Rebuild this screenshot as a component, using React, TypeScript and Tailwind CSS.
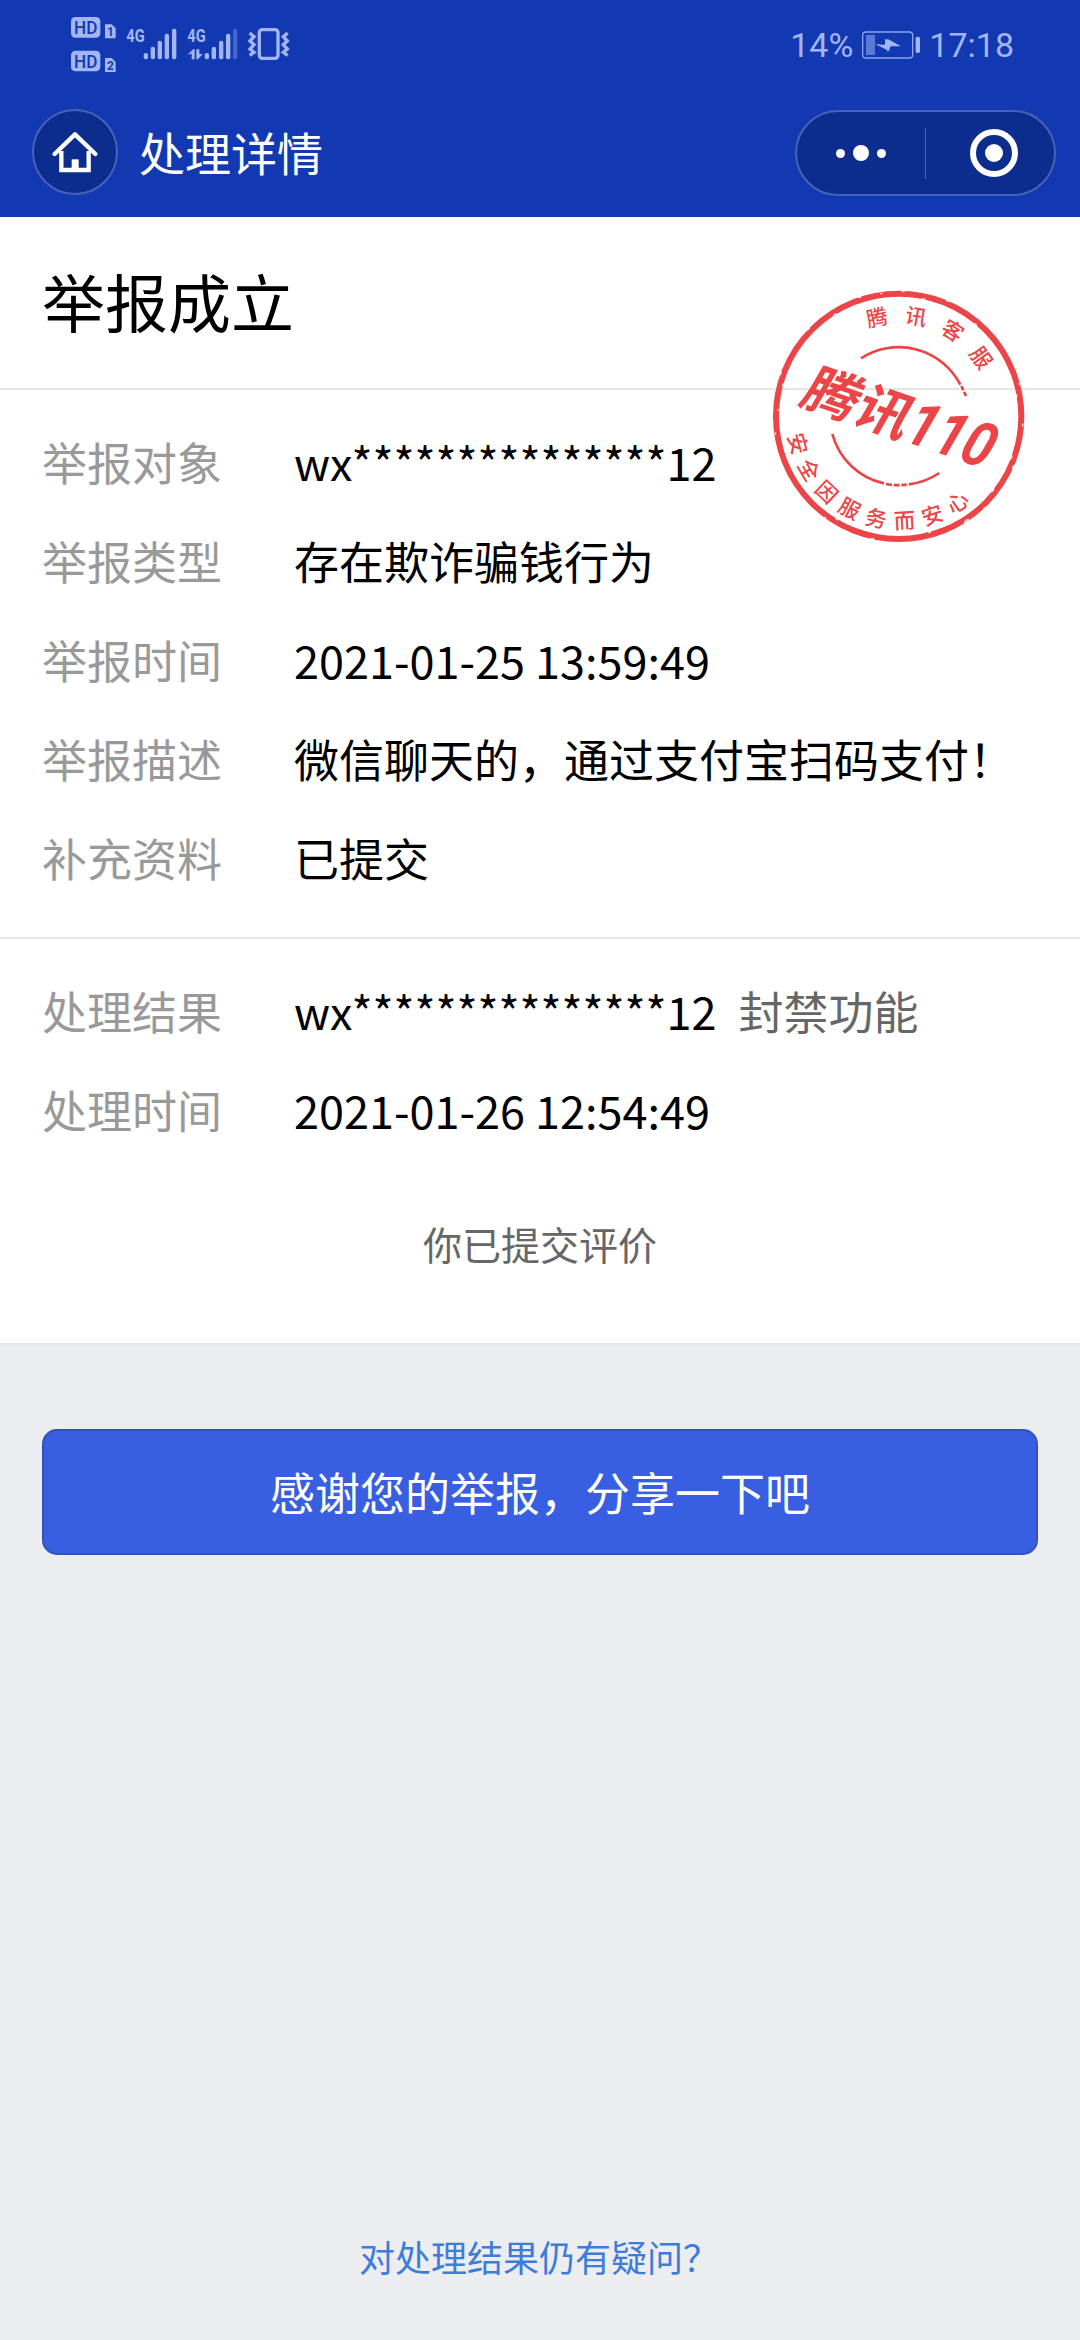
import type { ReactNode } from 'react'

type Row = { label: string; value: string; extra?: string }

const reportRows: Row[] = [
  { label: '举报对象', value: 'wx***************12' },
  { label: '举报类型', value: '存在欺诈骗钱行为' },
  { label: '举报时间', value: '2021-01-25 13:59:49' },
  { label: '举报描述', value: '微信聊天的，通过支付宝扫码支付！' },
  { label: '补充资料', value: '已提交' },
]

const resultRows: Row[] = [
  { label: '处理结果', value: 'wx***************12', extra: '封禁功能' },
  { label: '处理时间', value: '2021-01-26 12:54:49' },
]

const SignalIcons = () => (
  <svg width="260" height="90" viewBox="0 0 780 270" fill="#a3b6f3" stroke="none">
    {/* HD 1 / HD 2 */}
    {[0, 101].map((dy, i) => (
      <g key={dy} transform={`translate(0 ${dy})`}>
        <rect x="63" y="51" width="88" height="62" rx="13" />
        <text x="107" y="102" fontSize="54" fontWeight="500" textAnchor="middle" textLength="70" lengthAdjust="spacingAndGlyphs" fill="#1239b2" fontFamily="Roboto, sans-serif">HD</text>
        <path d="M165 73h20l12 12v30h-32z" />
        <text x="181" y="108" fontSize="36" fontWeight="700" textAnchor="middle" fill="#1239b2" fontFamily="Roboto, sans-serif">{i + 1}</text>
      </g>
    ))}

    <text x="229" y="126" fontSize="57" fontWeight="700" textLength="55" lengthAdjust="spacingAndGlyphs" fontFamily="Roboto, sans-serif">4G</text>
    <rect x="281" y="159" width="13" height="19" rx="6" />
    <rect x="302" y="140" width="13" height="38" rx="6" />
    <rect x="323" y="122" width="13" height="56" rx="6" />
    <rect x="344" y="101" width="13" height="77" rx="6" />
    <rect x="366" y="86" width="13" height="92" rx="6" />

    <text x="412" y="126" fontSize="57" fontWeight="700" textLength="55" lengthAdjust="spacingAndGlyphs" fontFamily="Roboto, sans-serif">4G</text>
    <path d="M413 164l16-16h5v30h-9v-17zM439 148h9v14h10l-14 16h-5z" />
    <rect x="464" y="159" width="13" height="19" rx="6" />
    <rect x="485" y="140" width="13" height="38" rx="6" />
    <rect x="507" y="122" width="13" height="56" rx="6" />
    <rect x="528" y="101" width="13" height="77" rx="6" />
    <rect x="549" y="86" width="13" height="92" rx="6" opacity="0.35" />

    {/* vibrate */}
    <g fill="none" stroke="#a3b6f3" strokeWidth="10">
      <rect x="628" y="89" width="56" height="86" rx="9" />
      <path d="M599 99l13 11-12 13 12 11-12 13 12 10-13 9M713 99l-13 11 12 13-12 11 12 13-12 10 13 9" />
    </g>
  </svg>
)

const BatteryIcon = () => (
  <svg width="60" height="30" viewBox="0 0 180 90" fill="none">
    <rect x="8" y="6" width="150" height="78" rx="10" stroke="#8ba2ec" strokeWidth="4" />
    <rect x="18" y="15" width="27" height="60" fill="#5b7ad6" />
    <rect x="167" y="20" width="13" height="49" rx="5" fill="#a3b6f3" />
    <path d="M46 42l36 5V26l39 22-33-2v18z" fill="#a3b6f3" />
    <path d="M47 44h28V26l47 23-30 0-9 17-3-13z" fill="#a3b6f3" />
  </svg>
)

const HomeIcon = () => (
  <svg width="46" height="42" viewBox="0 0 138 126" fill="none" stroke="#fff" strokeLinejoin="round">
    <path d="M8 69L69 10l61 59" strokeWidth="13" strokeLinecap="round" />
    <path d="M28 60v57h82V60" strokeWidth="13" strokeLinejoin="miter" />
    <path d="M59 85h21v32H59z" fill="#fff" stroke="none" />
  </svg>
)

const ring = (chars: string, start: number, step: number, r: number, bottom: boolean) =>
  chars.split('').map((char, i) => (
    <text
      key={i}
      transform={`translate(416 409) rotate(${start + step * i}) translate(0 ${bottom ? r : -r})`}
      y="23"
      fontSize="64"
      fontWeight="500"
      textAnchor="middle"
    >
      {char}
    </text>
  ))

// worn spots on the outer ring: [angle, size, offset from the ring's middle]
const wear = [
  [-108, 5, 9], [-122, 5, -8], [-88, 4, 7], [-67, 6, 10], [-78, 5, -9], [-50, 4, -8], [-136, 5, 9], [-160, 5, 9],
  [-165, 4, -8], [4, 4, 5], [20, 6, -9], [24, 5, 8], [38, 5, -9], [47, 4, 9], [57, 7, 7], [75, 4, -8], [102, 5, 8],
  [121, 5, -9], [126, 4, 8], [-10, 4, -9], [-15, 3, 7], [183, 3, -6], [172, 3, 5], [-98, 3, 4],
]

const Stamp = () => (
  <svg
    className="absolute top-[280px] left-[760px]"
    width="280"
    height="270"
    viewBox="0 0 840 810"
    fill="#ec4547"
    fontFamily="'Noto Sans CJK SC', sans-serif"
  >
    <circle cx="416" cy="409" r="368" fill="none" stroke="#ec4547" strokeWidth="18" />
    {wear.map(([angle, size, offset], i) => (
      <ellipse
        key={i}
        transform={`translate(416 409) rotate(${angle}) translate(${368 + offset} 0)`}
        rx={size / 1.4}
        ry={size * 1.3}
        fill="#fff"
        opacity="0.75"
      />
    ))}
    <g fill="none" stroke="#ec4547" strokeWidth="8">
      <path d="M303 235A208 208 0 0 1 601 314" />
      <path d="M604 318l14 30" strokeDasharray="14 5" />
      <path d="M217 462A206 206 0 0 0 372 610" />
      <path d="M378 612A206 206 0 0 0 440 614" strokeDasharray="18 5" />
      <path d="M446 613A206 206 0 0 0 538 579" />
    </g>
    {ring('腾讯客服', -12.3, 22.3, 303, false)}
    {ring('安全因服务而安心', 74.8, -15.6, 314, true)}
    <g transform="translate(112 366) rotate(19) skewX(-11)">
      <text x="2" y="2" fontSize="162" fontWeight="700" textLength="330" lengthAdjust="spacingAndGlyphs">腾讯</text>
      <text x="328" y="5" fontSize="182" fontWeight="500" stroke="#ec4547" strokeWidth="4" textLength="264" lengthAdjust="spacingAndGlyphs" fontFamily="Roboto, sans-serif">110</text>
    </g>
  </svg>
)

const InfoRow = ({ label, value, extra }: Row) => (
  <div className="flex h-[99px] items-center text-[45px] whitespace-nowrap">
    <span className="w-[252px] shrink-0 text-[#999999]">{label}</span>
    <span>{value}</span>
    {extra && <span className="ml-[22px] text-[#666666]">{extra}</span>}
  </div>
)

const Section = ({ children }: { children: ReactNode }) => (
  <section className="border-t-2 border-[#e6e6e6] px-[42px]">{children}</section>
)

export default function App() {
  return (
    <div className="relative flex h-[2340px] w-[1080px] flex-col overflow-hidden bg-[#ecedf1] font-['Noto_Sans_CJK_SC',sans-serif] text-black">
      <header className="h-[217px] shrink-0 bg-[#1239b2]">
        {/* status bar */}
        <div className="flex h-[90px] items-center justify-between pr-[66px] pl-[50px] font-[Roboto,sans-serif] text-[34px] text-[#a3b6f3]">
          <SignalIcons />
          <div className="flex items-center">
            <span>14%</span>
            <span className="mr-[9px] ml-[7px]"><BatteryIcon /></span>
            <span>17:18</span>
          </div>
        </div>

        {/* navigation */}
        <div className="flex items-start justify-between pt-[19px] pr-[24px] pl-[32px]">
          <div className="flex h-[86px] items-center">
            <div className="flex size-[86px] items-center justify-center rounded-full border-2 border-[#4662b9] bg-[#0d2d8e]">
              <HomeIcon />
            </div>
            <h1 className="ml-[21px] pb-[2px] text-[46px] leading-none text-white">处理详情</h1>
          </div>
          <div className="mt-px flex h-[86px] w-[261px] items-center rounded-full border-2 border-[#4662b9] bg-[#0d2d8e]">
            <div className="flex w-[128px] items-center justify-center gap-[8px]">
              <i className="size-[9px] rounded-full bg-white" />
              <i className="size-[16px] rounded-full bg-white" />
              <i className="size-[9px] rounded-full bg-white" />
            </div>
            <div className="h-[51px] w-px bg-[#4662b9]" />
            <div className="flex flex-1 items-center justify-center pl-[7px]">
              <div className="flex size-[48px] items-center justify-center rounded-full border-[6px] border-white">
                <i className="size-[18px] rounded-full bg-white" />
              </div>
            </div>
          </div>
        </div>
      </header>

      <main className="h-[1128px] shrink-0 border-b-2 border-[#e3e4e7] bg-white">
        <h2 className="flex h-[171px] items-center px-[42px] pb-[4px] text-[63px]">举报成立</h2>

        <Section>
          <div className="pt-[22px] pb-[30px]">
            {reportRows.map((row) => (
              <InfoRow key={row.label} {...row} />
            ))}
          </div>
        </Section>

        <Section>
          <div className="pt-[22px]">
            {resultRows.map((row) => (
              <InfoRow key={row.label} {...row} />
            ))}
          </div>
          <p className="mt-[54px] text-center text-[39px] leading-[60px] text-[#666666]">你已提交评价</p>
        </Section>
      </main>

      <button className="mx-[42px] mt-[84px] h-[126px] shrink-0 rounded-[15px] border-2 border-[#3152bd] bg-[#385ee2] text-[45px] text-white">
        感谢您的举报，分享一下吧
      </button>

      <a className="mt-auto mb-[54px] pr-[2px] text-center text-[36px] leading-[60px] text-[#3d7dd8]">对处理结果仍有疑问？</a>

      <Stamp />
    </div>
  )
}
